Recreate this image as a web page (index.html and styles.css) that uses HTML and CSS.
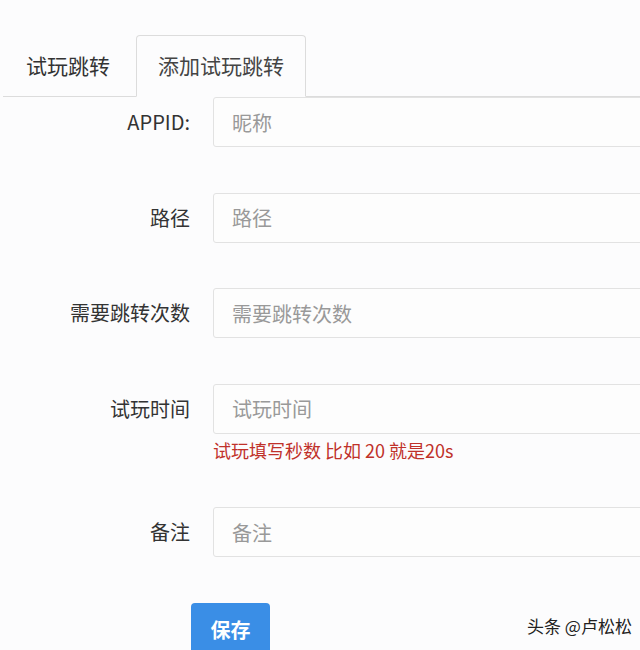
FILE: index.html
```html
<!DOCTYPE html>
<html lang="zh-CN">
<head>
<meta charset="utf-8">
<title>添加试玩跳转</title>
<link rel="stylesheet" href="styles.css">
</head>
<body>
<div class="page">
  <ul class="tabs">
    <li class="tab">试玩跳转</li>
    <li class="tab active">添加试玩跳转</li>
  </ul>
  <form class="form">
    <div class="group">
      <label class="label">APPID:</label>
      <div class="field"><input class="input" type="text" placeholder="昵称"></div>
    </div>
    <div class="group">
      <label class="label">路径</label>
      <div class="field"><input class="input" type="text" placeholder="路径"></div>
    </div>
    <div class="group">
      <label class="label">需要跳转次数</label>
      <div class="field"><input class="input" type="text" placeholder="需要跳转次数"></div>
    </div>
    <div class="group">
      <label class="label">试玩时间</label>
      <div class="field">
        <input class="input" type="text" placeholder="试玩时间">
        <p class="help">试玩填写秒数 比如 20 就是20s</p>
      </div>
    </div>
    <div class="group">
      <label class="label">备注</label>
      <div class="field"><input class="input" type="text" placeholder="备注"></div>
    </div>
    <div class="actions">
      <button class="btn" type="button">保存</button>
    </div>
  </form>
  <div class="watermark">头条 @卢松松</div>
</div>
</body>
</html>
```
FILE: styles.css
```css
html, body {
  margin: 0;
  padding: 0;
  overflow: hidden;
  background: #fcfcfd;
}
body {
  font-family: "Noto Sans CJK SC", "Noto Sans", sans-serif;
  color: #333;
}
.page {
  position: relative;
  width: 640px;
  height: 650px;
  overflow: hidden;
}
.tabs {
  list-style: none;
  margin: 35px 0 0 3px;
  padding: 0 0 0 1px;
  display: flex;
  gap: 4px;
  border-bottom: 1px solid #dcdcdc;
  height: 61px;
}
.tab {
  font-size: 21px;
  line-height: 59px;
  height: 61px;
  box-sizing: border-box;
  padding: 0 21px;
  color: #333;
  border: 1px solid transparent;
  border-radius: 4px 4px 0 0;
}
.tab.active {
  border-color: #dcdcdc;
  border-bottom-color: #fcfcfd;
  background: #fcfcfd;
  height: 62px;
  color: #444;
}
.form {
  margin: 0;
  padding: 0;
}
.group {
  display: grid;
  grid-template-columns: 190px 460px;
  column-gap: 23px;
  margin-bottom: 45.5px;
}
.label {
  text-align: right;
  font-size: 20px;
  line-height: 49px;
  color: #333;
}
.field {
  display: flex;
  flex-direction: column;
}
.input {
  box-sizing: border-box;
  width: 460px;
  height: 50px;
  border: 1px solid #e2e2e2;
  border-radius: 3px;
  background: #fdfdfd;
  padding: 0 18px;
  font-family: inherit;
  font-size: 20px;
  color: #333;
  outline: none;
}
.input::placeholder {
  color: #999;
}
.help {
  margin: 4px 0 0;
  font-size: 18px;
  line-height: 24px;
  color: #c0312a;
}
.actions {
  padding-left: 191px;
}
.btn {
  width: 79px;
  height: 54px;
  border: none;
  border-radius: 4px;
  background: #3a8ee6;
  color: #fff;
  font-family: inherit;
  font-size: 20px;
  font-weight: bold;
  line-height: 54px;
  padding: 0;
}
.watermark {
  position: absolute;
  left: 527px;
  top: 614px;
  font-size: 17px;
  line-height: 24px;
  color: #222;
  text-shadow: 0 0 2px #fff, 0 0 2px #fff;
}
```
